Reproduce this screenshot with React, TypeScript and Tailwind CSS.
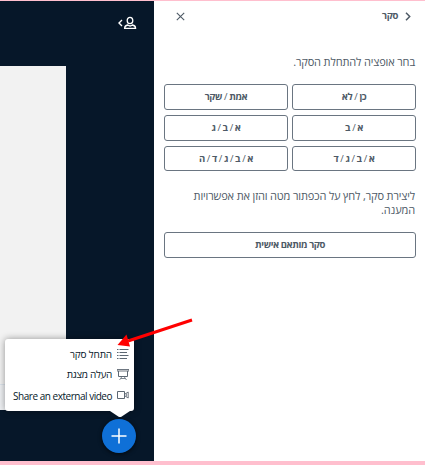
import React from "react";

function PollOption({ children }: { children: React.ReactNode }) {
  return (
    <button className="flex items-center justify-center rounded-[3px] border border-[#6a7581] bg-white pt-[1px] text-[9.5px] font-bold tracking-[-0.42px] text-[#4e5a66]">
      {children}
    </button>
  );
}

function Choices({ options }: { options: string[] }) {
  return (
    <PollOption>
      <span className="whitespace-pre">
        {options.map((option, i) => (
          <React.Fragment key={option}>
            {i > 0 && <span className="font-normal"> / </span>}
            {option}
          </React.Fragment>
        ))}
      </span>
    </PollOption>
  );
}

function MenuItem({ label, icon, className }: { label: string; icon: React.ReactNode; className: string }) {
  return (
    <button className="flex h-[20.5px] w-full items-center gap-[5px] whitespace-nowrap text-[#061729]">
      {icon}
      <span className={className}>{label}</span>
    </button>
  );
}

function PollIcon() {
  return (
    <svg width="12" height="12" viewBox="0 0 12 12" stroke="#5d6873" fill="none">
      <path d="M0 1.5h1.5M2.5 1.5h9M0 4.5h1.5M2.5 4.5h7.5M0 7.5h1.5M2.5 7.5h9M0 10.5h1.5M2.5 10.5h7.5" />
    </svg>
  );
}

function PresentationIcon() {
  return (
    <svg width="12" height="12" viewBox="0 0 12 12" stroke="#5d6873" fill="none">
      <path d="M0 .5h12v1.5H0z" strokeWidth="0.9" />
      <path d="M1.5 2v5.5h9V2" />
      <path d="M5 7.5L2.5 11M7 7.5L9.5 11M4 9.5h4" strokeWidth="0.8" />
    </svg>
  );
}

function VideoIcon() {
  return (
    <svg width="12" height="12" viewBox="0 0 12 12" stroke="#5d6873" fill="none">
      <path d="M.5 2.5h7v7h-7z" />
      <path d="M8 5l3.2-2v6L8 7M9.3 4.5v3" strokeWidth="0.9" />
    </svg>
  );
}

export default function App() {
  return (
    <div className="relative flex h-[465px] w-[425px] flex-col overflow-hidden border-t border-b-4 border-[#ffbfce] bg-white font-['Open_Sans','Noto_Sans',sans-serif]">
      <div className="flex min-h-0 flex-1">
        <main className="flex w-[154px] shrink-0 flex-col bg-[#061729]">
          <div className="flex h-[65px] justify-end pr-[17px] pt-[15px]">
            <svg width="20" height="15" viewBox="0 0 20 15" fill="none" stroke="white" strokeWidth="1.3">
              <path d="M5 4L2 7l3 3" strokeWidth="1.4" />
              <ellipse cx="13" cy="4.5" rx="2.8" ry="3.2" />
              <path d="M10.8 9C8.7 9.4 7.6 10.8 7.6 12.4h11c0-1.6-1.1-3-3.2-3.4c-1.2 1-3.4 1-4.6 0z" />
            </svg>
          </div>
          <div className="flex h-[344px] w-[66px] flex-col bg-[#f2f2f2]">
            <div className="mt-auto h-[26px] border-t border-[#dce4ec] bg-[#eef0f3]" />
          </div>
        </main>
        <aside dir="rtl" className="flex flex-1 flex-col pl-[9px] pr-[9px] text-[#4e5a66]">
          <header className="flex h-[30px] items-center justify-between pr-[5px] pl-[13px]">
            <div className="flex items-center gap-[7px]">
              <svg width="6" height="9" viewBox="0 0 6 9" fill="none" stroke="#4e5a66" strokeWidth="1.5">
                <path d="M1 .8l3.7 3.7L1 8.2" />
              </svg>
              <h1 className="text-[9.5px] font-bold tracking-[-0.3px]">סקר</h1>
            </div>
            <svg width="9" height="9" viewBox="0 0 9 9" stroke="#4e5a66" strokeWidth="1.1">
              <path d="M.8 .8l7.4 7.4M8.2 .8L.8 8.2" />
            </svg>
          </header>
          <p className="mt-[23px] h-[16px] whitespace-nowrap pr-[1px] text-[11px] leading-[16px] tracking-[-0.14px]">בחר אופציה להתחלת הסקר.</p>
          <div className="ml-[1px] mt-[14px] grid grid-cols-2 grid-rows-[26px_26px_25px] gap-x-[4px] gap-y-[5px]">
            <Choices options={["כן", "לא"]} />
            <Choices options={["אמת", "שקר"]} />
            <Choices options={["א", "ב"]} />
            <Choices options={["א", "ב", "ג"]} />
            <Choices options={["א", "ב", "ג", "ד"]} />
            <Choices options={["א", "ב", "ג", "ד", "ה"]} />
          </div>
          <p className="mt-[18px] h-[28px] whitespace-nowrap pr-[1px] text-[11px] leading-[14px] tracking-[-0.14px]">
            ליצירת סקר, לחץ על הכפתור מטה והזן את אפשרויות
            <br />
            המענה.
          </p>
          <div className="ml-[1px] mt-[15px] grid grid-rows-[26px]">
            <PollOption>סקר מותאם אישית</PollOption>
          </div>
        </aside>
      </div>

      <div dir="rtl" className="absolute left-[5px] top-[338px] h-[72px] w-[129px] rounded-[3px] bg-white pr-[5px] pt-[5px] shadow-[0_0_7px_rgba(0,0,0,0.4)]">
        <MenuItem label="התחל סקר" icon={<PollIcon />} className="text-[10px] tracking-[-0.15px]" />
        <MenuItem label="העלה מצגת" icon={<PresentationIcon />} className="text-[10px] tracking-[-0.3px]" />
        <MenuItem label="Share an external video" icon={<VideoIcon />} className="pt-[2px] text-[10px] tracking-[-0.48px]" />
        <svg className="absolute left-[105px] top-[72px]" width="20" height="6" viewBox="0 0 20 6">
          <path d="M0 0h20l-9 6H9z" fill="white" />
        </svg>
      </div>
      <button aria-label="+" className="absolute left-[102px] top-[418px] flex h-[34px] w-[34px] items-center justify-center rounded-full bg-[#0f70d7] shadow-[0_1px_4px_rgba(0,0,0,0.7)]">
        <svg width="16" height="16" viewBox="0 0 16 16" stroke="white" strokeWidth="1.5">
          <path d="M8 .5v15M.5 8h15" />
        </svg>
      </button>
      <svg className="absolute left-[115px] top-[315px]" width="80" height="34" viewBox="0 0 80 34">
        <path d="M77 4L13 25" stroke="#ff0000" strokeWidth="3" />
        <path d="M2.5 29L11.5 18.5L15 30.5z" fill="#ff0000" />
      </svg>
    </div>
  );
}
